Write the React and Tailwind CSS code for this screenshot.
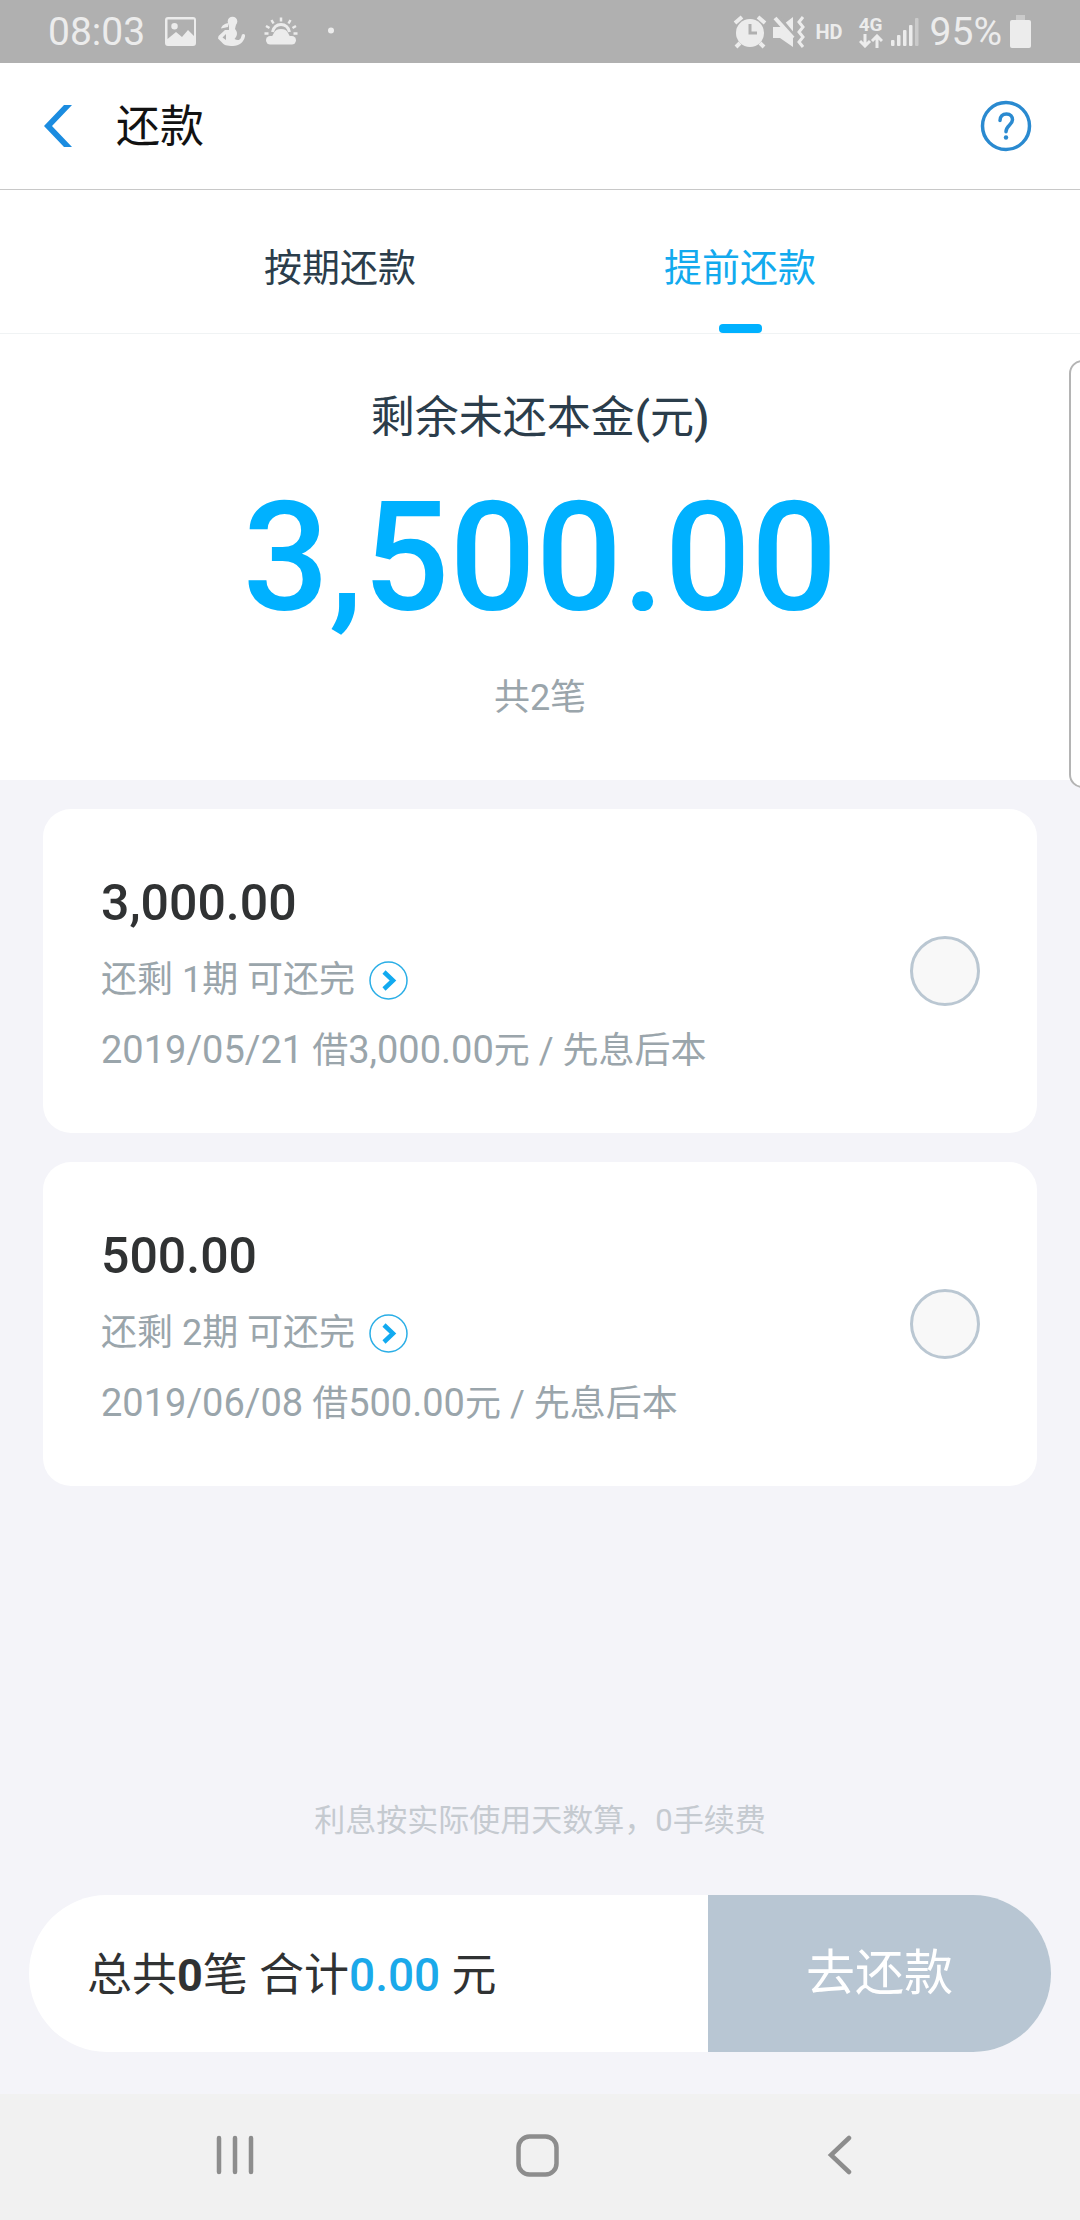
import { useState } from "react";

const LOANS = [
  { id: 1, amount: "3,000.00", periods: 1, date: "2019/05/21", type: "先息后本" },
  { id: 2, amount: "500.00", periods: 2, date: "2019/06/08", type: "先息后本" },
];

const TABS = [
  { key: "schedule", label: "按期还款" },
  { key: "early", label: "提前还款" },
];

export default function App() {
  const [tab, setTab] = useState("early");
  const [selected, setSelected] = useState([]);

  const toggle = (id) =>
    setSelected((prev) => (prev.includes(id) ? prev.filter((x) => x !== id) : [...prev, id]));

  const total = LOANS.filter((l) => selected.includes(l.id)).reduce(
    (sum, l) => sum + Number(l.amount.replace(",", "")),
    0
  );

  return (
    <div className="relative flex min-h-screen flex-col overflow-hidden bg-[#f4f4f9] font-['Roboto','Noto_Sans_CJK_SC',sans-serif] text-[#303233]">
      <StatusBar />
      <Header />

      {/* ---------- Tabs ---------- */}
      <nav className="flex h-36 justify-center border-b border-[#f0f3f4] bg-white px-[140px]">
        {TABS.map((t) => (
          <button
            key={t.key}
            onClick={() => setTab(t.key)}
            className={`flex flex-1 flex-col items-center justify-end text-[38px] leading-[56px] ${
              tab === t.key ? "text-[#12aaee]" : "text-[#2b3d4b]"
            }`}
          >
            {t.label}
            <span className={`mt-7 h-[9px] w-[43px] rounded ${tab === t.key ? "bg-[#00b1ff]" : ""}`} />
          </button>
        ))}
      </nav>

      {/* ---------- Summary ---------- */}
      <section className="flex flex-col items-center bg-white pt-[52px] pb-14">
        <h2 className="text-[44px] leading-[64px] text-[#2b3d4b]">
          剩余未还本金<span className="font-medium">(</span>元<span className="font-medium">)</span>
        </h2>
        <p className="mt-4 text-[152px] leading-[184px] font-medium text-[#00b1ff]">3,500.00</p>
        <p className="mt-[22px] text-[36px] leading-[52px] text-[#9aa5ab]">共2笔</p>
      </section>

      {/* ---------- Loans ---------- */}
      <main className="flex flex-1 flex-col gap-[29px] px-[43px] pt-[29px]">
        {LOANS.map((loan) => (
          <LoanCard
            key={loan.id}
            loan={loan}
            checked={selected.includes(loan.id)}
            onToggle={() => toggle(loan.id)}
          />
        ))}
      </main>

      {/* ---------- Checkout ---------- */}
      <footer className="px-[29px] pb-[42px]">
        <p className="text-center text-[31px] leading-[48px] text-[#c5cad0]">利息按实际使用天数算，0手续费</p>
        <div className="mt-[50px] flex h-[157px] overflow-hidden rounded-[78px] bg-white">
          <p className="flex flex-1 items-center pt-1 pl-[58px] text-[45px] whitespace-pre">
            总共<b>{selected.length}</b>笔 合计
            <span className="text-[46px] font-medium text-[#1ba9ea]">{total.toFixed(2)}</span> 元
          </p>
          <button className="w-[343px] bg-[#b8c6d3] text-[49px] text-white">去还款</button>
        </div>
      </footer>

      <NavBar />

      {/* Edge panel handle */}
      <div className="absolute top-[360px] -right-4 h-[428px] w-[27px] rounded-[14px] border-2 border-[#b4b4b4] bg-white" />
    </div>
  );
}

function Header() {
  return (
    <header className="flex h-[127px] items-center border-b border-[#c8c8c8] bg-white pr-12 pl-11">
      <button aria-label="返回">
        <svg width="29" height="42" viewBox="0 0 29 42" fill="#1b8ce0">
          <path d="M20 0h8L8 21l20 21h-8L0 21z" />
        </svg>
      </button>
      <h1 className="flex-1 pt-0.5 pl-[43px] text-[44px] text-[#121212]">还款</h1>
      <button aria-label="帮助">
        <svg width="52" height="52" viewBox="0 0 52 52" fill="none" stroke="#2a8ad0" strokeWidth="3.5">
          <circle cx="26" cy="26" r="23.5" />
          <path d="M20 20.5c0-4 2.500-6.500 6.500-6.500s6 2.700 6 5.800c0 5-6.500 5.500-6.500 12" strokeLinecap="round" />
          <circle cx="26" cy="37.500" r="2.200" fill="#2a8ad0" stroke="none" />
        </svg>
      </button>
    </header>
  );
}

function LoanCard({ loan, checked, onToggle }) {
  return (
    <article className="flex items-center justify-between rounded-[28px] bg-white pr-[57px] pl-[58px]">
      <div className="pt-[58px] pb-[47px]">
        <h3 className="text-[50px] leading-[72px] font-medium">{loan.amount}</h3>
        <div className="mt-1.5 flex items-center text-[36px] leading-[70px] text-[#9aa5ab]">
          <span>还剩 {loan.periods}期 可还完</span>
          <button aria-label="查看还款计划" className="ml-3.5">
            <svg width="39" height="39" viewBox="0 0 39 39" fill="none">
              <circle cx="19.500" cy="19.500" r="18.500" stroke="#2aaee6" strokeWidth="1.500" />
              <path d="M15 11l9 8.500-9 8.500" stroke="#12aaf0" strokeWidth="4.500" />
            </svg>
          </button>
        </div>
        <p className="text-[36px] leading-[70px] text-[#9aa5ab]">
          <span className="text-[38px]">{loan.date}</span> 借
          <span className="text-[38px]">{loan.amount}</span>元 / {loan.type}
        </p>
      </div>
      <input
        type="checkbox"
        checked={checked}
        onChange={onToggle}
        aria-label={`选择 ${loan.amount}`}
        className="size-[70px] shrink-0 appearance-none rounded-full border-3 border-[#bac7d2] bg-[#f8f8f8] checked:border-[#00b1ff] checked:bg-[#00b1ff]"
      />
    </article>
  );
}

/* ================================================================
   System bars
   ================================================================ */
function StatusBar() {
  return (
    <div className="flex h-[63px] items-center justify-between bg-[#b0b0b0] pr-[49px] pl-12 text-[39px] text-[#ececec]">
      <div className="flex items-center">
        <span className="pt-0.5">08:03</span>
        <svg className="ml-5" width="174" height="32" viewBox="0 0 174 32" fill="#ececec">
          <path
            fillRule="evenodd"
            d="M3 1h25a3 3 0 0 1 3 3v23a3 3 0 0 1-3 3H3a3 3 0 0 1-3-3V4a3 3 0 0 1 3-3zM2.500 3.500V23l8.500-7 6 5 6-7 6 6V3.500zM9.500 7a3.200 3.200 0 1 1 0 6.500 3.200 3.200 0 0 1 0-6.500z"
          />
          {/* health */}
          <circle cx="67.500" cy="5.500" r="4.800" />
          <path
            fillRule="evenodd"
            d="M64 8.500h7l-1 4.500c3 3 2.500 7-.5 10 3 2 6 1 6.500-1.500l1-3c2-1.500 3.500 0 3 2-1.500 6-6 9.500-12 9.500s-9.500-1-11-3.500l-4-4 .5-2.500L60 14h4zM57.500 21.500l3.500 2.500v-6z"
          />
          <path d="M56 12.500c1-3.500 4-5 8-5.500l-1 4z" />
          {/* weather */}
          <rect x="101" y="20" width="30" height="8.500" rx="4.200" />
          <path d="M106 22c3-4 3-9 10-9s7 5 10 9z" />
          <path d="M107.500 16c2.500-10 14.500-10 17 0" fill="none" stroke="#ececec" strokeWidth="3" />
          <path
            d="M116 1.500v4M106.500 4l2 3.500M125.500 4l-2 3.500M101 10l3.500 2M131 10l-3.500 2M99.500 17.500h4M128.500 17.500h4"
            stroke="#ececec"
            strokeWidth="2.500"
          />
          <circle cx="166" cy="14.500" r="3" />
        </svg>
      </div>

      <div className="flex items-center">
        <svg width="72" height="34" viewBox="0 0 72 34" fill="none" stroke="#ececec" strokeWidth="4">
          <circle cx="17" cy="18" r="14" fill="#ececec" stroke="none" />
          <path d="M2 8l7-6M32 8l-7-6M7 28l-4 4M27 28l4 4" />
          <path d="M17 9v9h7" stroke="#b0b0b0" strokeWidth="3" />
          <path d="M40 12h7L60 2v30l-13-9h-7z" fill="#ececec" stroke="none" />
          <path d="M44 0l18 22" stroke="#b0b0b0" />
          <path d="M42 3l18 20" />
          <path d="M70 2l-4 5 4 5-4 5 4 5-4 5 4 5" strokeWidth="3" />
        </svg>
        <span className="ml-2.5 text-[20px] font-bold">HD</span>
        <span className="ml-4 flex flex-col items-center text-[19px] leading-[18px] font-bold">
          4G
          <svg width="24" height="14" viewBox="0 0 24 14" fill="none" stroke="#ececec" strokeWidth="3">
            <path d="M6 0v12M1 7l5 5 5-5M18 14V2M13 7l5-5 5 5" />
          </svg>
        </span>
        <svg className="ml-2" width="29" height="30" viewBox="0 0 29 30" fill="#ececec">
          <rect x="0" y="23" width="3.500" height="6" rx="1" />
          <rect x="6" y="18" width="3.500" height="11" rx="1" />
          <rect x="12" y="13" width="3.500" height="16" rx="1" />
          <rect x="18" y="8" width="3.500" height="21" rx="1" />
          <rect x="24" y="1" width="3.500" height="28" rx="1" fill="#cacaca" />
        </svg>
        <span className="ml-2.5 pt-0.5">95%</span>
        <svg className="ml-2" width="21" height="33" viewBox="0 0 21 33">
          <rect x="6" y="0" width="9" height="6" fill="#cacaca" />
          <rect x="0" y="5" width="21" height="28" rx="2" fill="#ececec" />
        </svg>
      </div>
    </div>
  );
}

function NavBar() {
  return (
    <div className="flex h-[126px] items-center bg-[#f1f1f1] pr-[90px] pb-1 pl-[84px]">
      <button aria-label="最近任务" className="flex flex-1 justify-center">
        <svg width="38" height="40" viewBox="0 0 38 40" stroke="#8d8d8d" strokeWidth="4.500" strokeLinecap="round">
          <path d="M3 3v34M19 3v34M35 3v34" />
        </svg>
      </button>
      <button aria-label="主屏幕" className="flex flex-1 justify-center">
        <svg width="43" height="43" viewBox="0 0 43 43" fill="none" stroke="#8d8d8d" strokeWidth="4.500">
          <rect x="2.500" y="2.500" width="38" height="38" rx="11" />
        </svg>
      </button>
      <button aria-label="返回上一级" className="flex flex-1 justify-center">
        <svg width="25" height="40" viewBox="0 0 25 40" fill="none" stroke="#8d8d8d" strokeWidth="4.500" strokeLinecap="round">
          <path d="M22 3L4 20l18 17" />
        </svg>
      </button>
    </div>
  );
}
